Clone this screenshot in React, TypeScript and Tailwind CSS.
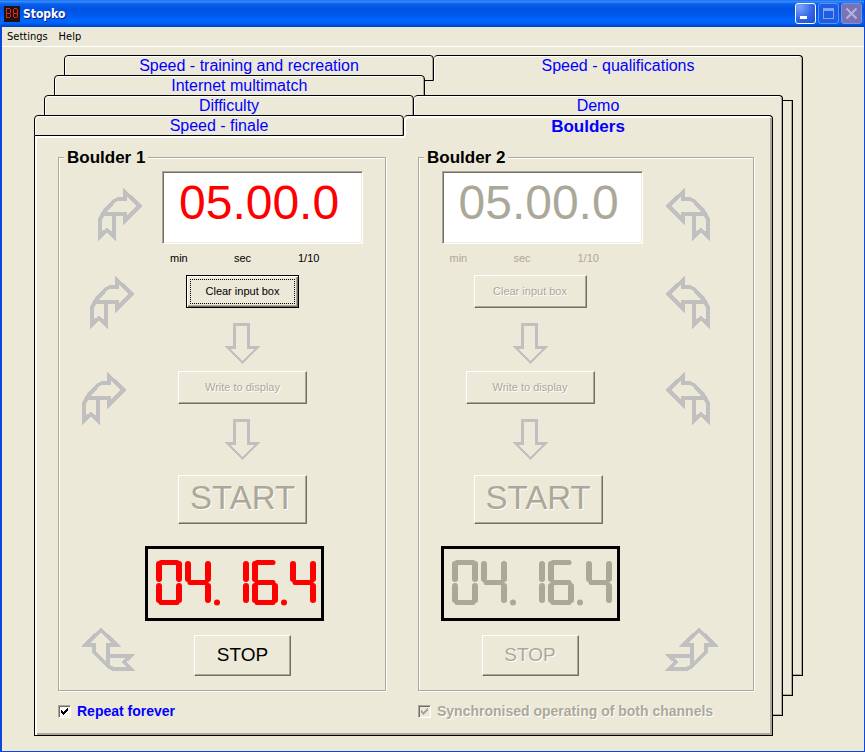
import { useState, type ReactNode } from "react";

const SEGMENTS: Record<string, [number, number, number, number, number]> = {
  // x1, y1, x2, y2, thickness
  a: [5, 13.5, 21, 13.5, 5],
  b: [23, 15, 23, 30, 6],
  c: [23, 37, 23, 51, 6],
  d: [5, 53.5, 21, 53.5, 5],
  e: [3, 37, 3, 51, 6],
  f: [3, 15, 3, 30, 6],
  g: [5, 33.5, 21, 33.5, 5],
};

const DIGITS: Record<string, string> = {
  "0": "abcdef",
  "1": "bc",
  "4": "bcfg",
  "6": "acdefg",
};

const CLOCK = [
  { digit: "0", x: 8 },
  { digit: "4", x: 37 },
  { digit: "1", x: 75 },
  { digit: "6", x: 104 },
  { digit: "4", x: 142 },
];

function LedClock({ off }: { off?: boolean }) {
  return (
    <div className="border-3 border-black">
      <svg
        role="img"
        aria-label="04.16.4"
        width="173"
        height="69"
        className={off ? "text-[#aca899]" : "text-[#ff0000]"}
        stroke="currentColor"
        strokeLinecap="round"
      >
        {CLOCK.map(({ digit, x }) => (
          <g key={x} transform={`translate(${x} 0)`}>
            {DIGITS[digit].split("").map((s) => {
              const [x1, y1, x2, y2, w] = SEGMENTS[s];
              return <line key={s} x1={x1} y1={y1} x2={x2} y2={y2} strokeWidth={w} />;
            })}
          </g>
        ))}
        <circle cx="69" cy="53.5" r="3" fill="currentColor" stroke="none" />
        <circle cx="136" cy="53.5" r="3" fill="currentColor" stroke="none" />
      </svg>
    </div>
  );
}

function TurnArrow() {
  return (
    <svg width="44" height="54" fill="none" stroke="#c0c0c0" strokeWidth="4" strokeMiterlimit="10" shapeRendering="crispEdges">
      <path d="M16 26V48.5L9 42L2 48.5V32L5 25L16 13L21 10.5H27V4L41.5 18L27 32.5V26H5" />
    </svg>
  );
}

function ReturnArrow() {
  return (
    <svg width="53" height="45" fill="none" stroke="#c0c0c0" strokeWidth="4" strokeMiterlimit="10" shapeRendering="crispEdges">
      <path d="M26 28.5H49L42 35L49 42H31L26 39L12 25V17.5H4L19 3L34 17.5H26V39" />
    </svg>
  );
}

function DownArrow() {
  return (
    <svg width="35" height="41" className="mt-[15px] mb-[7px] shrink-0" fill="#c0c0c0" fillRule="evenodd" shapeRendering="crispEdges">
      <path d="M8 0H25V23H35L17 41L0 23H8ZM11 3V26H5L17 38L29 26H22V3Z" />
    </svg>
  );
}

function PushButton({ children, className = "", focused, disabled }: { children: ReactNode; className?: string; focused?: boolean; disabled?: boolean }) {
  return (
    <button
      disabled={disabled}
      className={`flex shrink-0 items-center justify-center ${
        focused
          ? "border border-black shadow-[inset_1px_1px_0_#fff,inset_-1px_-1px_0_#716f64,inset_-2px_-2px_0_#aca899]"
          : "border border-t-white border-l-white border-r-[#716f64] border-b-[#716f64] shadow-[inset_-1px_-1px_0_#aca899]"
      } ${disabled ? "text-[#aca899] [text-shadow:1px_1px_0_#fff]" : "text-black"} ${className}`}
    >
      {focused ? (
        <span className="flex h-[25px] w-[105px] items-center justify-center border border-dotted border-black">{children}</span>
      ) : (
        children
      )}
    </button>
  );
}

interface ChannelProps {
  name: string;
  disabled?: boolean;
  mirrored?: boolean;
}

function Channel({ name, disabled, mirrored }: ChannelProps) {
  const [time, setTime] = useState("05.00.0");
  return (
    <fieldset className="min-w-0 border border-[#aca899] shadow-[inset_1px_1px_0_#fff,1px_1px_0_#fff]">
      <legend className="ml-[5px] bg-[#ece9d8] px-[3px] pt-px text-[17px] leading-[19px] font-bold">{name}</legend>
      <div className={`flex pb-[14px] ${mirrored ? "flex-row-reverse" : ""}`}>
        <div className={`flex shrink-0 flex-col ${mirrored ? "w-[112px] items-end pr-[43px]" : "w-[86px] pl-[23px]"}`}>
          <div className={`mt-[21px] ${mirrored ? "-scale-x-100" : "ml-4"}`}>
            <TurnArrow />
          </div>
          <div className={`mt-[34px] ${mirrored ? "-scale-x-100" : "ml-2"}`}>
            <TurnArrow />
          </div>
          <div className={`mt-[42px] ${mirrored ? "-scale-x-100" : ""}`}>
            <TurnArrow />
          </div>
          <div className={`mt-auto mb-1 ${mirrored ? "-mr-2 -scale-x-100" : ""}`}>
            <ReturnArrow />
          </div>
        </div>
        <div className={`flex min-w-0 flex-1 flex-col items-center pt-1 text-[11px] ${mirrored ? "" : "pr-[45px]"}`}>
          <div className={`w-[201px] shrink-0 ${mirrored ? "ml-6" : "ml-10"}`}>
            <input
              aria-label={`${name} time`}
              value={time}
              disabled={disabled}
              onChange={(e) => setTime(e.target.value)}
              className={`block h-[73px] w-full border border-t-[#aca899] border-l-[#aca899] border-r-white border-b-white bg-white pb-[10px] pl-4 text-5xl shadow-[inset_1px_1px_0_#716f64,inset_-1px_-1px_0_#f1efe2] outline-none ${
                disabled ? "text-[#aca899]" : "text-[#ff0000]"
              }`}
            />
            <div className={`mt-[7px] grid grid-cols-[64px_64px_1fr] pl-2 leading-[14px] ${disabled ? "text-[#aca899]" : ""}`}>
              <span>min</span>
              <span>sec</span>
              <span>1/10</span>
            </div>
          </div>
          <PushButton focused={!disabled} disabled={disabled} className="mt-[10px] h-[33px] w-[113px]">
            Clear input box
          </PushButton>
          <DownArrow />
          <PushButton disabled className="h-[33px] w-[129px]">
            Write to display
          </PushButton>
          <DownArrow />
          <PushButton disabled className={`mt-2 h-[49px] w-[129px] pb-1 text-[33px] ${mirrored ? "ml-4" : ""}`}>
            START
          </PushButton>
          <div className={`mt-[22px] ${mirrored ? "" : "mr-4"}`}>
            <LedClock off={disabled} />
          </div>
          <PushButton disabled={disabled} className="mt-[14px] h-[41px] w-[97px] text-[19px]">
            STOP
          </PushButton>
        </div>
      </div>
    </fieldset>
  );
}

function CheckOption({ label, disabled }: { label: string; disabled?: boolean }) {
  const [checked, setChecked] = useState(true);
  return (
    <label className={`flex items-center gap-[6px] text-sm leading-5 font-bold whitespace-nowrap ${disabled ? "text-[#aca899] [text-shadow:1px_1px_0_#fff]" : "text-[#0000ff]"}`}>
      <span className="grid shrink-0">
        <input
          type="checkbox"
          checked={checked}
          disabled={disabled}
          onChange={(e) => setChecked(e.target.checked)}
          className={`size-[13px] appearance-none border border-t-[#aca899] border-l-[#aca899] border-r-white border-b-white shadow-[inset_1px_1px_0_#716f64,inset_-1px_-1px_0_#f1efe2] [grid-area:1/1] ${
            disabled ? "bg-[#ece9d8]" : "bg-white"
          }`}
        />
        {checked && (
          <svg width="13" height="13" className={`pointer-events-none [grid-area:1/1] ${disabled ? "text-[#aca899]" : "text-black"}`} fill="currentColor" shapeRendering="crispEdges">
            <path d="M3 5L5 7L10 2V5L5 10L3 8Z" />
          </svg>
        )}
      </span>
      {label}
    </label>
  );
}

function tabLook(front?: boolean, active?: boolean) {
  if (active) return "h-[21px] pt-px text-[17px] font-bold shadow-[inset_2px_2px_0_#fff,inset_-2px_0_0_#aca899]";
  if (front) return "h-[21px] text-base shadow-[inset_1px_1px_0_#fff,inset_-1px_0_0_#aca899,1px_2px_0_#fff]";
  return "h-[26px] text-base shadow-[inset_1px_1px_0_#fff,inset_-1px_0_0_#aca899]";
}

function Tab({ children, active, front, last }: { children: ReactNode; active?: boolean; front?: boolean; last?: boolean }) {
  return (
    <button
      role="tab"
      aria-selected={Boolean(active)}
      className={`relative flex flex-1 justify-center rounded-t-[4px] border-t border-r border-black bg-[#ece9d8] leading-5 text-[#0000ff] ${
        last ? "" : "border-b border-l"
      } ${tabLook(front, active)}`}
    >
      {children}
    </button>
  );
}

function BackSheet({ className, tabs }: { className: string; tabs: string[] }) {
  return (
    <div className={`flex flex-col [grid-area:1/1] ${className}`}>
      <div className="flex" role="tablist">
        <Tab>{tabs[0]}</Tab>
        {tabs[1] ? <Tab last>{tabs[1]}</Tab> : <div className="flex-1 border-b border-black" />}
      </div>
      <div className="flex-1 border-r border-b border-l border-black bg-[#ece9d8] shadow-[inset_-1px_-1px_0_#aca899]" />
    </div>
  );
}

function AppIcon() {
  return (
    <svg width="16" height="16" className="bg-[#1c1414]" fill="none" stroke="#e02818" shapeRendering="crispEdges">
      <path d="M2.5 2V12M2 2.5H6M3 7.5H6M2 11.5H6M6.5 3V7M6.5 8V11M9.5 3V7M9.5 8V11M10 2.5H13M9 7.5H14M10 11.5H13M13.5 3V7M13.5 8V11" />
    </svg>
  );
}

export default function App() {
  return (
    <div className="flex min-h-screen flex-col border-r border-b border-l-2 border-[#0a48dc] bg-[#ece9d8] font-['Liberation_Sans',Arial,sans-serif] text-black">
      <header className="-ml-0.5 flex h-[27px] items-center bg-[linear-gradient(#0a5cf0_0,#3c94ff_1px,#0a60ec_4px,#0053e1_9px,#0058ea_14px,#0066ff_20px,#0064fa_23px,#0046c8_26px)] pl-1">
        <AppIcon />
        <h1 className="ml-[3px] flex-1 pt-px font-['DejaVu_Sans_Condensed','Open_Sans',sans-serif] text-xs font-bold text-white [text-shadow:1px_1px_0_#0a1883]">Stopko</h1>
        <div className="flex gap-0.5 pr-0.5">
          <button aria-label="Minimize" className="size-[21px] rounded-[3px] border border-white bg-[radial-gradient(circle_at_20%_15%,#7fa4f4,#2d62e8_60%,#1c50d4)]">
            <svg width="19" height="19">
              <rect x="4" y="12" width="7" height="3" fill="#fff" />
            </svg>
          </button>
          <button aria-label="Maximize" disabled className="size-[21px] rounded-[3px] border border-[#5c92f4] bg-[#1e5ce2]">
            <svg width="19" height="19" fill="none" stroke="#7fa6f4" shapeRendering="crispEdges">
              <path d="M4.5 4.5H14.5V14.5H4.5ZM4 5.5H15M4 6.5H15" />
            </svg>
          </button>
          <button aria-label="Close" disabled className="size-[21px] rounded-[3px] border border-[#8a8cd0] bg-[#7873b4]">
            <svg width="19" height="19" stroke="#b4b2de" strokeWidth="2">
              <path d="M4.5 4.5L14.5 14.5M14.5 4.5L4.5 14.5" />
            </svg>
          </button>
        </div>
      </header>

      <nav className="flex h-5 items-center gap-[11px] border-b border-white pt-px pl-[5px] font-['DejaVu_Sans_Condensed','Open_Sans',sans-serif] text-[11px]">
        <button>Settings</button>
        <button>Help</button>
      </nav>

      <main className="grid pt-2 pr-[61px] pb-[15px] pl-8">
        <BackSheet className="mb-[60px] ml-[30px]" tabs={["Speed - training and recreation", "Speed - qualifications"]} />
        <BackSheet className="mt-5 mr-[10px] mb-10 ml-5" tabs={["Internet multimatch"]} />
        <BackSheet className="mt-10 mr-5 mb-5 ml-[10px]" tabs={["Difficulty", "Demo"]} />
        <div className="mt-[60px] mr-[30px] [grid-area:1/1]">
          <div className="flex" role="tablist">
            <Tab front>Speed - finale</Tab>
            <Tab front active last>
              Boulders
            </Tab>
          </div>
          <div className="border-r border-b border-l border-black bg-[#ece9d8] pt-[11px] pr-[18px] pb-[14px] pl-[23px] shadow-[inset_2px_0_0_#fff,inset_-2px_-2px_0_#aca899]">
            <div className="grid grid-cols-[328fr_336fr] gap-x-8 gap-y-[10px]">
              <Channel name="Boulder 1" />
              <Channel name="Boulder 2" disabled mirrored />
              <CheckOption label="Repeat forever" />
              <CheckOption label="Synchronised operating of both channels" disabled />
            </div>
          </div>
        </div>
      </main>
    </div>
  );
}
